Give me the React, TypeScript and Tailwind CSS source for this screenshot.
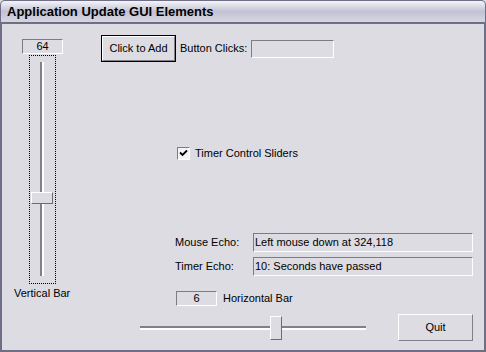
const face = "bg-[#dcdce2]";

function Sunken({ className, children }: { className: string; children?: React.ReactNode }) {
  return (
    <div
      className={`border border-t-[#7c7c82] border-l-[#7c7c82] border-b-white border-r-white ${className}`}
    >
      {children}
    </div>
  );
}

function Button({ label, isDefault, className }: { label: string; isDefault?: boolean; className: string }) {
  return (
    <div className={`${isDefault ? "border border-black" : ""} ${className}`}>
      <div className="w-full h-full border border-t-white border-l-white border-b-[#808086] border-r-[#808086] flex items-center justify-center">
        {label}
      </div>
    </div>
  );
}

function VerticalSlider() {
  return (
    <div className="ml-[27px] mt-px w-[27px] h-[229px] border border-dotted border-black flex flex-col items-center">
      <div className="relative mt-[6px] w-[4px] h-[214px] ml-[-2px] border-l-2 border-l-[#808086] border-r-2 border-r-white">
        <div className="absolute left-[-11px] top-[130px] w-[22px] h-[12px] bg-[#dcdce2] border border-t-white border-l-white border-b-[#6c6c72] border-r-[#6c6c72]" />
      </div>
    </div>
  );
}

function HorizontalSlider() {
  return (
    <div className="ml-[45px] mt-[10px] w-[226px] h-[24px] flex flex-col justify-center">
      <div className="relative h-[4px] border-t-2 border-t-[#808086] border-b-2 border-b-white">
        <div className="absolute left-[130px] top-[-12px] w-[12px] h-[24px] bg-[#dcdce2] border border-t-white border-l-white border-b-[#6c6c72] border-r-[#6c6c72]" />
      </div>
    </div>
  );
}

export default function App() {
  return (
    <div
      className={`w-[486px] h-[352px] flex flex-col ${face} text-[11px] text-black leading-none`}
      style={{ fontFamily: '"Liberation Sans", Arial, sans-serif' }}
    >
      <div className="h-[24px] shrink-0 rounded-t-[5px] border border-[#6e6e86] border-b-2 bg-gradient-to-b from-[#f4f4f8] via-[#c2c2d4] to-[#d6d6e2] flex items-center pl-[6px]">
        <span className="text-[13px] font-bold">Application Update GUI Elements</span>
      </div>
      <div className="flex-1 flex border-l-2 border-r-2 border-b-2 border-[#6e6e86]">
        <div className="w-[93px] flex flex-col">
          <Sunken className="ml-[20px] mt-[15px] w-[41px] h-[15px] flex items-center justify-center">64</Sunken>
          <VerticalSlider />
          <div className="ml-[12px] mt-[4px]">Vertical Bar</div>
        </div>
        <div className="flex-1 flex flex-col">
          <div className="flex items-center mt-[11px]">
            <Button label="Click to Add" isDefault className="ml-[6px] w-[75px] h-[27px]" />
            <span className="ml-[4px]">Button Clicks:</span>
            <Sunken className="ml-[4px] w-[83px] h-[18px]" />
          </div>
          <div className="flex items-center mt-[85px] ml-[82px]">
            <div className="w-[13px] h-[13px] border border-t-[#7c7c82] border-l-[#7c7c82] border-b-white border-r-white bg-[#f4f4f6] flex items-center justify-center">
              <svg width="9" height="9" viewBox="0 0 9 9">
                <path d="M1 3.5 L3.5 6 L8 1.5" stroke="black" strokeWidth="1.8" fill="none" />
              </svg>
            </div>
            <span className="ml-[5px]">Timer Control Sliders</span>
          </div>
          <div className="flex items-center mt-[73px] ml-[80px]">
            <span className="w-[78px]">Mouse Echo:</span>
            <Sunken className="w-[220px] h-[19px] flex items-center pl-[1px]">Left mouse down at 324,118</Sunken>
          </div>
          <div className="flex items-center mt-[5px] ml-[80px]">
            <span className="w-[78px]">Timer Echo:</span>
            <Sunken className="w-[220px] h-[19px] flex items-center pl-[1px]">10: Seconds have passed</Sunken>
          </div>
          <div className="flex items-center mt-[15px] ml-[81px]">
            <Sunken className="w-[41px] h-[15px] flex items-center justify-center">6</Sunken>
            <span className="ml-[6px]">Horizontal Bar</span>
          </div>
          <div className="flex items-start">
            <HorizontalSlider />
            <Button label="Quit" className="ml-[32px] mt-[8px] w-[75px] h-[27px]" />
          </div>
        </div>
      </div>
    </div>
  );
}
